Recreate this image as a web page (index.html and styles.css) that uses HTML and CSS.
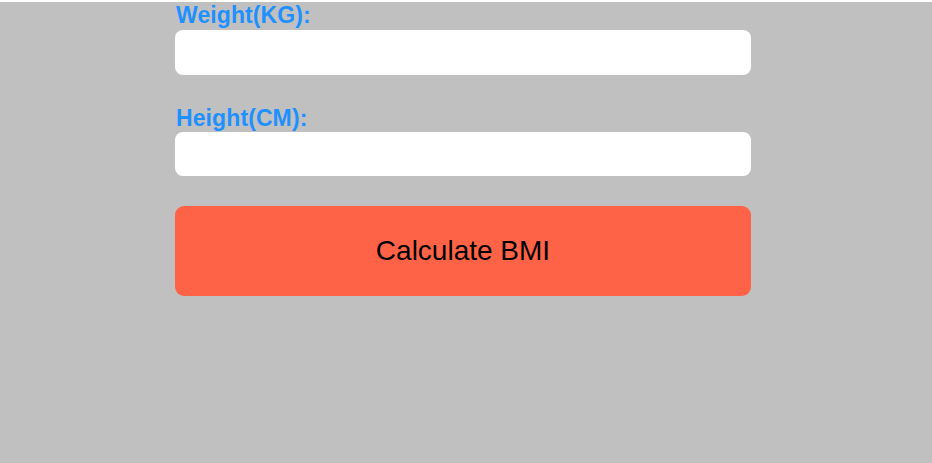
FILE: index.html
```html
<!DOCTYPE html>
<html>
<head>
<meta charset="utf-8">
<title>BMI Calculator</title>
<link rel="stylesheet" href="styles.css">
</head>
<body>
<div class="page">
  <form class="bmi-form">
    <label class="field-label" for="weight">Weight(KG):</label>
    <input class="field-input" id="weight" type="text">
    <label class="field-label field-label--tight" for="height">Height(CM):</label>
    <input class="field-input field-input--short" id="height" type="text">
    <button class="calc-btn" type="button">Calculate BMI</button>
  </form>
</div>
</body>
</html>
```
FILE: styles.css
```css
html, body {
  margin: 0;
  padding: 0;
  background: #ffffff;
}
.page {
  margin-top: 2px;
  height: 461px;
  background: #c0c0c0;
  padding-left: 175px;
  box-sizing: border-box;
  font-family: "Liberation Sans", Arial, sans-serif;
}
.bmi-form {
  width: 576px;
  display: flex;
  flex-direction: column;
}
.field-label {
  display: block;
  font-size: 23px;
  font-weight: bold;
  color: #1e90ff;
  line-height: 26px;
  padding-left: 1px;
  margin-bottom: 2px;
  letter-spacing: 0.1px;
}
.field-label--tight {
  margin-bottom: 1px;
}
.field-input {
  height: 45px;
  box-sizing: border-box;
  border: none;
  border-radius: 8px;
  background: #ffffff;
  margin: 0 0 30px 0;
  padding: 0 10px;
  font-size: 18px;
  outline: none;
}
.field-input--short {
  height: 44px;
}
.calc-btn {
  height: 90px;
  border: none;
  border-radius: 9px;
  background: #ff6347;
  color: #000000;
  font-family: "Liberation Sans", Arial, sans-serif;
  font-size: 28px;
  padding: 0;
  cursor: pointer;
}
```
